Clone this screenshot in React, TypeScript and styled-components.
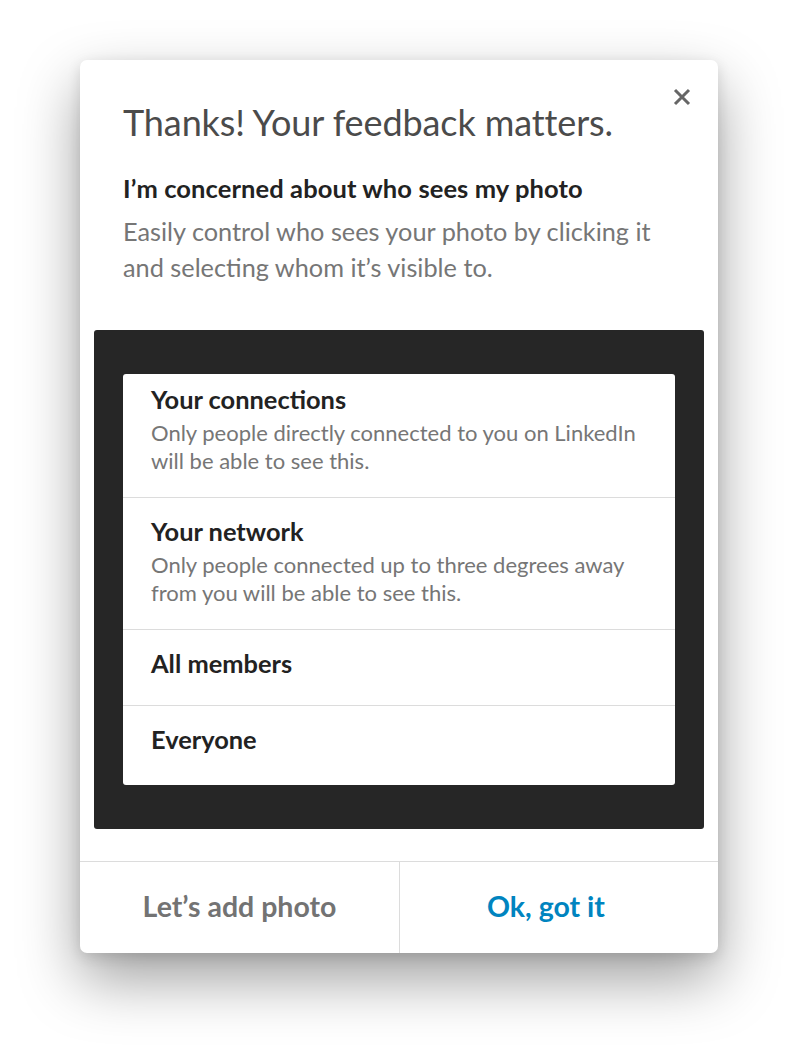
import React from "react";
import styled, { createGlobalStyle } from "styled-components";

const Global = createGlobalStyle`
  html, body { margin: 0; padding: 0; background: #ffffff; }
  body { font-family: "Source Sans Pro", Lato, "Noto Sans", sans-serif; -webkit-font-smoothing: antialiased; }
  * { box-sizing: border-box; }
`;

const Page = styled.div`
  width: 798px;
  height: 1054px;
  padding: 60px 80px 0 80px;
`;

const Card = styled.div`
  position: relative;
  width: 638px;
  height: 893px;
  background: #fff;
  border-radius: 7px;
  box-shadow: 0 26px 60px rgba(0, 0, 0, 0.38), 0 4px 14px rgba(0, 0, 0, 0.12);
  display: flex;
  flex-direction: column;
  overflow: hidden;
`;

const CloseButton = styled.button`
  position: absolute;
  top: 25px;
  right: 24px;
  width: 24px;
  height: 24px;
  padding: 0;
  border: none;
  background: transparent;
  display: flex;
  align-items: center;
  justify-content: center;
  cursor: pointer;
`;

const Header = styled.div`
  padding: 38px 43px 0 43px;
`;

const Title = styled.h1`
  margin: 0;
  font-size: 36px;
  line-height: 48px;
  font-weight: 400;
  color: #4b4b4b;
  letter-spacing: -0.1px;
`;

const Subtitle = styled.h2`
  margin: 26px 0 0 0;
  font-size: 25.5px;
  line-height: 32px;
  font-weight: 700;
  color: #222;
  letter-spacing: 0.1px;
`;

const Description = styled.p`
  margin: 9px 0 0 0;
  font-size: 25.3px;
  line-height: 36px;
  font-weight: 400;
  color: #767676;
`;

const Preview = styled.div`
  margin: 45px 14px 0 14px;
  background: #262626;
  border-radius: 3px;
  padding: 44px 29px;
`;

const List = styled.ul`
  list-style: none;
  margin: 0;
  padding: 0 0 4px 0;
  background: #fff;
  border-radius: 3px;
`;

const Item = styled.li<{ $first?: boolean }>`
  padding: ${(p) => (p.$first ? "6px" : "14px")} 28px 22px 28px;
  & + & { border-top: 1px solid #dcdcdc; }
`;

const ItemTitle = styled.div`
  font-size: 25.4px;
  line-height: 39px;
  font-weight: 700;
  color: #222;
`;

const ItemText = styled.div`
  font-size: 22px;
  line-height: 28px;
  color: #767676;
`;

const Footer = styled.div`
  margin-top: auto;
  height: 92px;
  border-top: 1px solid #dcdcdc;
  display: grid;
  grid-template-columns: 319px 1fr;
`;

const FooterButton = styled.button<{ $primary?: boolean }>`
  border: none;
  background: transparent;
  font-family: inherit;
  font-size: 28.5px;
  font-weight: 700;
  color: ${(p) => (p.$primary ? "#0084bf" : "#737373")};
  padding: ${(p) => (p.$primary ? "0 26px 4px 0" : "0 0 4px 0")};
  cursor: pointer;
  & + & { border-left: 1px solid #dcdcdc; }
`;

const options = [
  { title: "Your connections", text: "Only people directly connected to you on LinkedIn will be able to see this." },
  { title: "Your network", text: "Only people connected up to three degrees away from you will be able to see this." },
  { title: "All members" },
  { title: "Everyone" },
];

export default function App() {
  return (
    <>
      <Global />
      <Page>
        <Card>
          <CloseButton aria-label="Close">
            <svg width="18" height="18" viewBox="0 0 18 18">
              <path d="M2 2 L16 16 M16 2 L2 16" stroke="#666" strokeWidth="3" strokeLinecap="butt" />
            </svg>
          </CloseButton>
          <Header>
            <Title>Thanks! Your feedback matters.</Title>
            <Subtitle>I’m concerned about who sees my photo</Subtitle>
            <Description>
              Easily control who sees your photo by clicking it
              <br />
              and selecting whom it’s visible to.
            </Description>
          </Header>
          <Preview>
            <List>
              {options.map((o, i) => (
                <Item key={o.title} $first={i === 0}>
                  <ItemTitle>{o.title}</ItemTitle>
                  {o.text && <ItemText>{o.text}</ItemText>}
                </Item>
              ))}
            </List>
          </Preview>
          <Footer>
            <FooterButton>Let’s add photo</FooterButton>
            <FooterButton $primary>Ok, got it</FooterButton>
          </Footer>
        </Card>
      </Page>
    </>
  );
}
